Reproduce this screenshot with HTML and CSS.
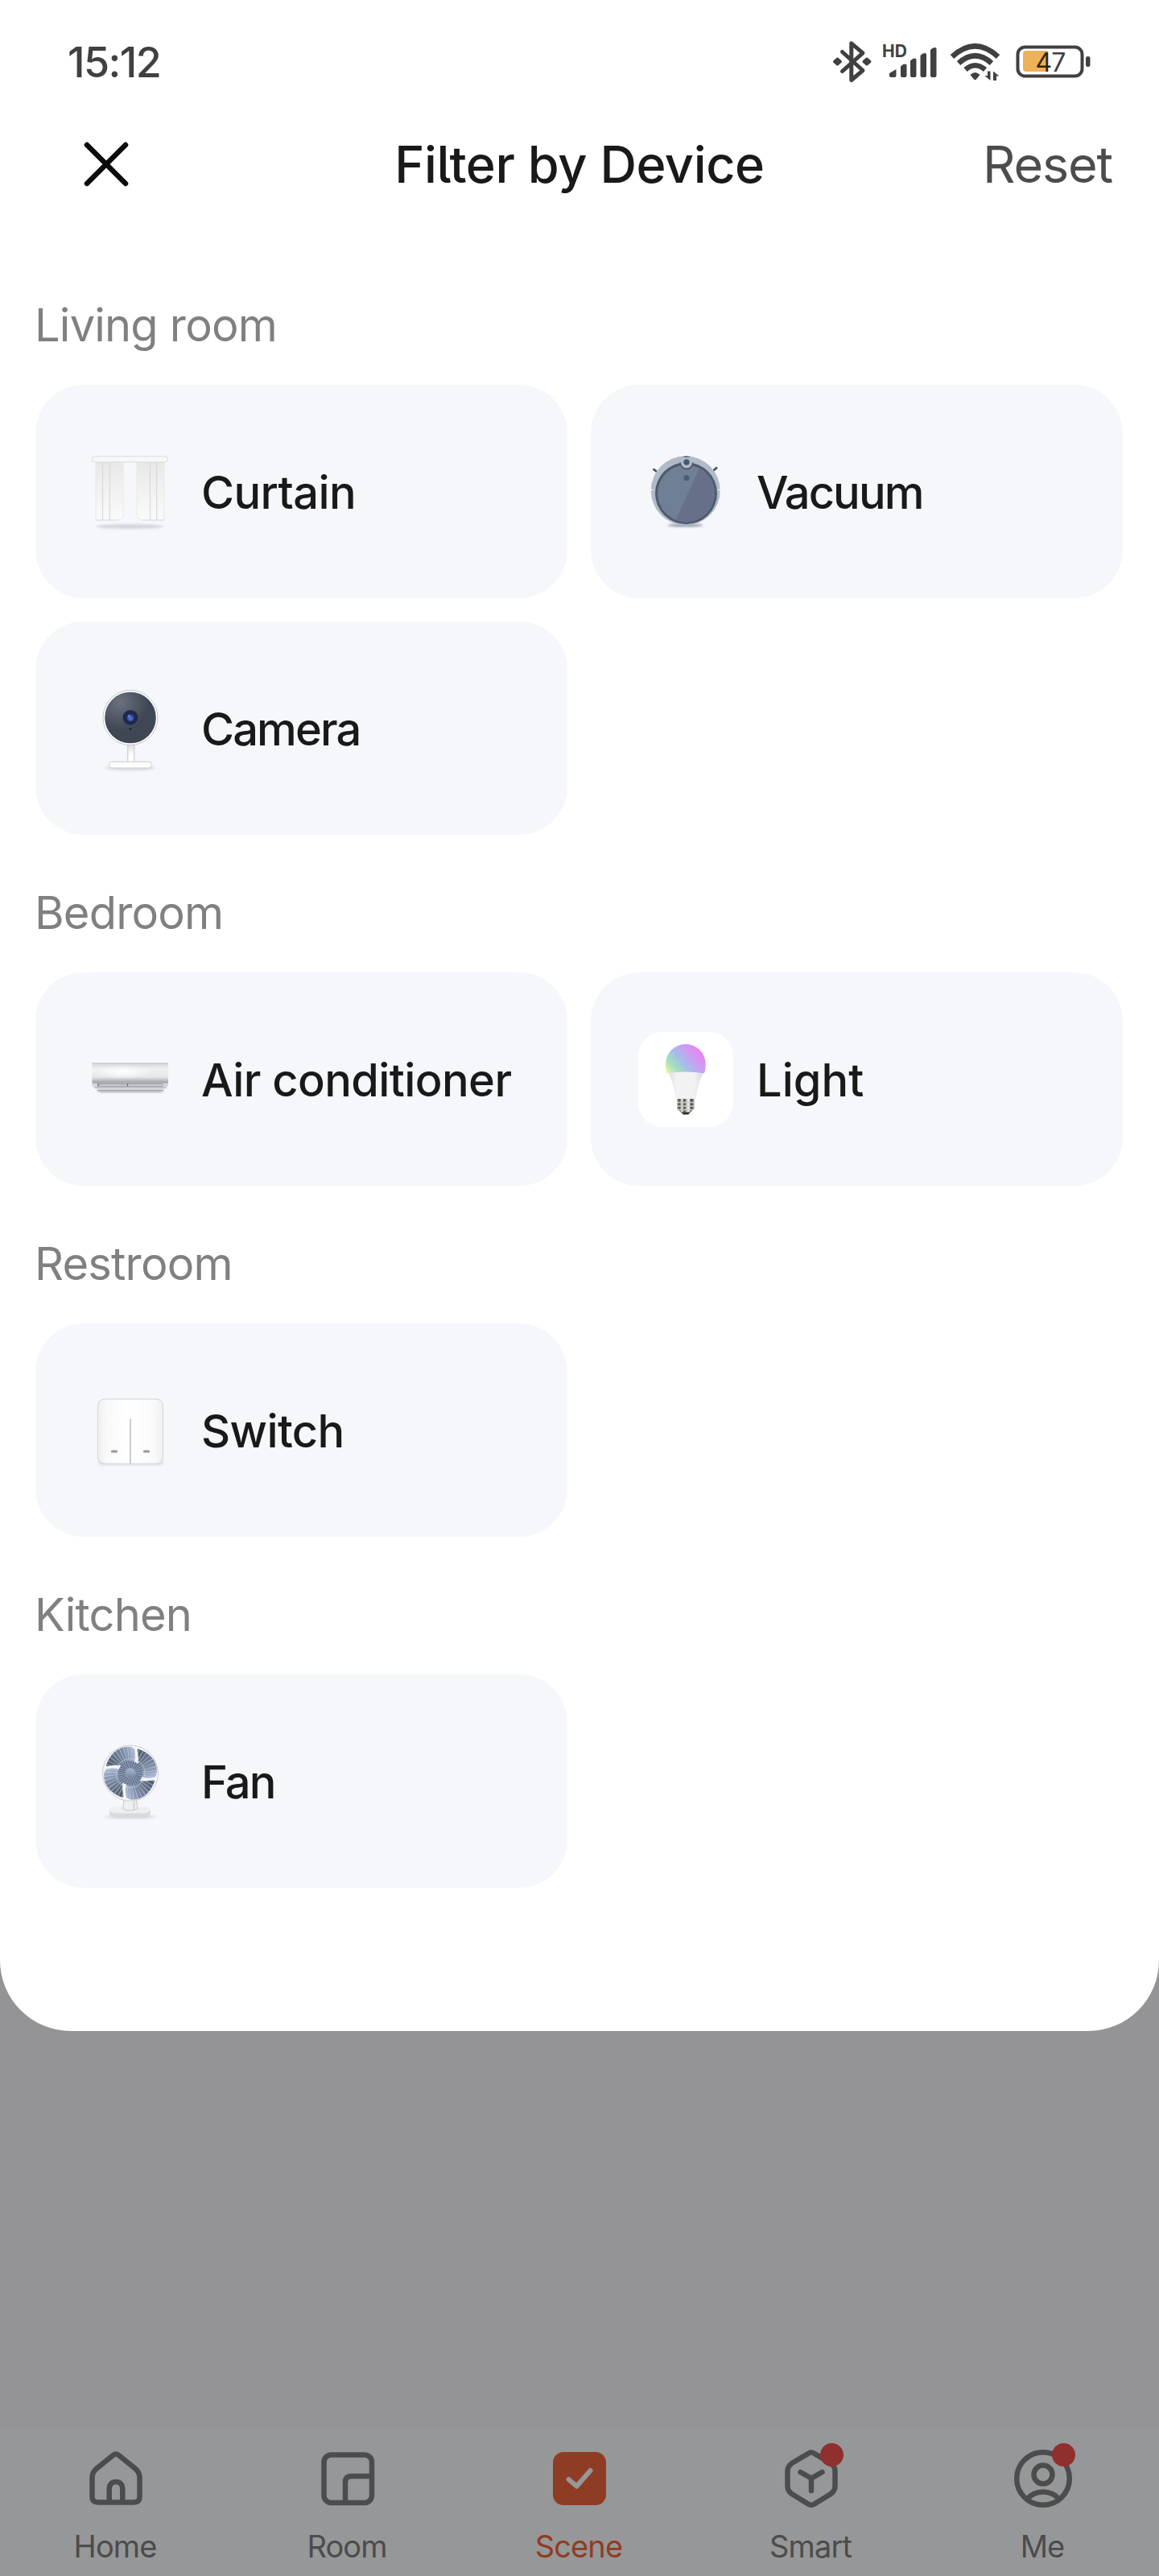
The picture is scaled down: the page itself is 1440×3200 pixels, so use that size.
FILE: index.html
```html
<!DOCTYPE html>
<html lang="en">
<head>
<meta charset="utf-8">
<title>Filter by Device</title>
<link rel="stylesheet" href="styles.css">
</head>
<body>
<div class="screen">
  <section class="sheet">
    <div class="status">
      <span class="status__time">15:12</span>
      <svg class="status__icons" width="330" height="60" viewBox="0 0 330 60">
        <!-- bluetooth -->
        <g transform="translate(-1030 -46)">
          <path d="M1046.5 64.5 L1072 87.5 L1057.8 99.5 V53.8 L1072 65.8 L1046.5 88.5" fill="none" stroke="#404040" stroke-width="5" stroke-linecap="round" stroke-linejoin="round"/>
          <path d="M1036.500 76.500l4-3.500 4 3.500-4 3.500zM1073 76.500l4-3.500 4 3.500-4 3.500z" fill="#404040" stroke="#404040" stroke-width="3" stroke-linejoin="round"/>
          <!-- signal -->
          <text class="status__hd" x="1096" y="71">HD</text>
          <g fill="#404040">
            <path d="M1105 91l8.500-5v8q0 2-2 2h-4.500q-2 0-2-2zM1119 82.500l3-2.500q4.500-1.500 4.500 1v13q0 2-2 2h-3.500q-2 0-2-2zM1131 75.500l3-2.500q4.500-1.500 4.500 1v20q0 2-2 2h-3.500q-2 0-2-2zM1143.500 69l3-2.500q4.500-1.500 4.500 1v26.500q0 2-2 2h-3.500q-2 0-2-2zM1156 62l3-2.500q4.500-1.500 4.500 1v33.500q0 2-2 2h-3.500q-2 0-2-2z"/>
          </g>
          <!-- wifi -->
          <g fill="none" stroke="#404040" stroke-width="6.500">
            <path d="M1183 70.500Q1211.500 44 1240 70.500"/>
            <path d="M1191 78.500Q1211.500 60 1232 78.500"/>
            <path d="M1199.500 86.500Q1211.500 76 1224 86.500"/>
          </g>
          <path d="M1205.500 93q6-6 12 0l-4.500 5.500q-1.500 1.500-3 0z" fill="#404040"/>
          <path d="M1227 88.500h3.500v11.500l-7-6h3.500zM1234 100v-11.500l7.500 6h-3.500v5.500z" fill="#404040"/>
          <!-- battery -->
          <rect x="1264.500" y="58.500" width="80" height="36" rx="9" fill="none" stroke="#404040" stroke-width="4"/>
          <path d="M1275 63h27v26h-27q-4 0-4-4v-18q0-4 4-4z" fill="#ebb257"/>
          <rect x="1349" y="70" width="5.500" height="13" rx="2.500" fill="#404040"/>
          <text class="status__level" x="1286.500" y="89"><tspan class="status__level-on">4</tspan>7</text>
        </g>
      </svg>
    </div>

    <header class="header">
      <svg class="header__close" width="66" height="66" viewBox="0 0 66 66"><path d="M9 9L57 57M57 9L9 57" stroke="#0b0b0b" stroke-width="6.500" stroke-linecap="round"/></svg>
      <h1 class="header__title">Filter by Device</h1>
      <span class="header__reset">Reset</span>
    </header>

    <main class="groups">
      <section class="group">
        <h2 class="group__title">Living room</h2>
        <div class="grid">
          <div class="card">
            <svg class="card__icon" viewBox="0 0 118 118">
              <defs>
                <linearGradient id="cloth" x1="0" y1="0" x2="0" y2="1"><stop offset="0" stop-color="#e8e8e8"/><stop offset="1" stop-color="#fbfbfb"/></linearGradient>
                <filter id="soft" x="-20%" y="-100%" width="140%" height="300%"><feGaussianBlur stdDeviation="1.800"/></filter>
              </defs>
              <ellipse cx="58.500" cy="102" rx="42" ry="2.800" fill="#d3d4d8" filter="url(#soft)"/>
              <path d="M16 21H50V88Q49 94 44 94H16zM67 21H101V94H73Q68 93 67 88z" fill="url(#cloth)" stroke="#e6e6e8" stroke-width=".8"/>
              <path d="M24.500 21V94M33.300 21V94M83.500 21V94M91.700 21V94" stroke="#d9d9da" stroke-width="1.200"/>
              <path d="M16 94H44M73 94H101" stroke="#dcdcde"/>
              <rect x="11.500" y="15" width="94" height="7" rx="3" fill="#f8f8f8" stroke="#dadada"/>
            </svg>
            <span class="card__label">Curtain</span>
          </div>
          <div class="card">
            <svg class="card__icon" viewBox="0 0 118 118">
              <ellipse cx="58.500" cy="100.500" rx="22" ry="1.800" fill="#8b90a0" filter="url(#soft)"/>
              <path d="M18.500 30.500l4.500 3.500M93.500 32.500l4.500-4" stroke="#465060" stroke-width="2.800"/>
              <circle cx="58.700" cy="57.500" r="43" fill="#b1bac8"/>
              <path d="M15 55.500l4.500.8-4.500 1.700zM102.500 55.500l-4.500.8 4.500 1.700z" fill="#f5f7fb"/>
              <circle cx="59.500" cy="60.800" r="38.500" fill="#4f5b6c"/>
              <circle cx="59.500" cy="61" r="35.500" fill="#6f7f96"/>
              <path d="M76.300 29.700A35.500 35.500 0 0 1 46.500 94z" fill="#667088"/>
              <circle cx="60" cy="23" r="8.500" fill="#4f5b6c"/>
              <path d="M53 16h14v6.500a7 7 0 0 1-14 0z" fill="#b1bac8"/>
              <path d="M51 16.500h18v6h-18z" fill="#b1bac8"/>
              <circle cx="60" cy="22.200" r="3.600" fill="#4b5768"/>
              <circle cx="60" cy="41.800" r="3.500" fill="#4f5b6c"/>
            </svg>
            <span class="card__label card__label--tight">Vacuum</span>
          </div>
          <div class="card">
            <svg class="card__icon" viewBox="0 0 118 118">
              <defs>
                <radialGradient id="face" cx=".3" cy=".2" r=".55"><stop offset="0" stop-color="#6c737f"/><stop offset="1" stop-color="#3f4654"/></radialGradient>
                <radialGradient id="iris" cx=".5" cy=".6" r=".6"><stop offset="0" stop-color="#4f80e0"/><stop offset="1" stop-color="#263590"/></radialGradient>
                <linearGradient id="stem" x1="0" y1="0" x2="0" y2="1"><stop offset="0" stop-color="#dfdfdf"/><stop offset=".6" stop-color="#fff"/></linearGradient>
              </defs>
              <ellipse cx="59" cy="108" rx="31" ry="3.500" fill="#dcdde0" filter="url(#soft)"/>
              <rect x="55.800" y="79" width="8" height="22" fill="url(#stem)" stroke="#c6c6c6"/>
              <rect x="32.500" y="100.300" width="53" height="7.700" rx="3.500" fill="#fdfdfd" stroke="#cccccc"/>
              <circle cx="59" cy="45.500" r="34" fill="#fff" stroke="#c4c4c4"/>
              <circle cx="59" cy="45.500" r="31.800" fill="url(#face)"/>
              <circle cx="59" cy="45.200" r="9.300" fill="#20294a"/>
              <circle cx="59" cy="45.500" r="4.600" fill="url(#iris)"/>
              <circle cx="57.300" cy="43.500" r=".9" fill="#a9bdf5"/>
              <circle cx="59" cy="59.500" r="1.500" fill="#20242e"/>
            </svg>
            <span class="card__label card__label--tight">Camera</span>
          </div>
        </div>
      </section>

      <section class="group">
        <h2 class="group__title">Bedroom</h2>
        <div class="grid">
          <div class="card">
            <svg class="card__icon" viewBox="0 0 118 118">
              <defs>
                <linearGradient id="shell" x1="0" y1="0" x2="0" y2="1"><stop offset="0" stop-color="#d6d6da"/><stop offset=".3" stop-color="#f0f0f1"/><stop offset=".7" stop-color="#e6e6e8"/><stop offset="1" stop-color="#9a9c9f"/></linearGradient>
                <radialGradient id="shine" cx=".4" cy=".5" r=".4"><stop offset="0" stop-color="#fff"/><stop offset="1" stop-color="#fff" stop-opacity="0"/></radialGradient>
              </defs>
              <path d="M16 72.500H102L96 74.500H22z" fill="#858990" filter="url(#soft)"/>
              <path d="M11.400 63H106V67L103 70H14.500L11.400 67z" fill="#d3d5d8"/>
              <rect x="11.400" y="38.500" width="94.600" height="25" fill="url(#shell)"/>
              <rect x="11.400" y="38.500" width="94.600" height="22" fill="url(#shine)"/>
              <path d="M11.400 39H106" stroke="#c4c4ca"/>
              <path d="M18 64.700H99M18 67.400H99" stroke="#8e9196" stroke-width="1"/>
              <path d="M19 64V67.500M55.500 64V67.500" stroke="#6a6d72" stroke-width="1.200"/>
              <path d="M98 68.500L101 65M15 69.500H103" stroke="#a8abb0" stroke-width="1"/>
              <path d="M18 72.500H100" stroke="#a4a8ae" stroke-width="1.500"/>
            </svg>
            <span class="card__label">Air conditioner</span>
          </div>
          <div class="card">
            <svg class="card__icon card__icon--tile" viewBox="0 0 118 118">
              <defs>
                <linearGradient id="glow" x1="0" y1=".9" x2="1" y2=".3"><stop offset="0" stop-color="#e4f79c"/><stop offset=".2" stop-color="#a5e0c0"/><stop offset=".45" stop-color="#a6bbe9"/><stop offset=".7" stop-color="#cf9bf5"/><stop offset="1" stop-color="#ee7ef0"/></linearGradient>
                <linearGradient id="neck" x1="0" y1="0" x2="1" y2="0"><stop offset="0" stop-color="#e0e0e2"/><stop offset=".25" stop-color="#f3f2f4"/><stop offset=".75" stop-color="#f1f1f3"/><stop offset="1" stop-color="#dadadd"/></linearGradient>
                <linearGradient id="screw" x1="0" y1="0" x2="1" y2="0"><stop offset="0" stop-color="#88857f"/><stop offset=".15" stop-color="#55524f"/><stop offset=".27" stop-color="#efefef"/><stop offset=".42" stop-color="#4a4744"/><stop offset=".58" stop-color="#d9d6d2"/><stop offset=".7" stop-color="#f2f2f2"/><stop offset=".82" stop-color="#3c3937"/><stop offset="1" stop-color="#a8a5a0"/></linearGradient>
              </defs>
              <path d="M48.500 82.500H69.500V95L65 99.500H52.500L48.500 95z" fill="url(#screw)"/>
              <path d="M48 87.500H70M48 92H70M48 96.500H69" stroke="#d0cdc9" stroke-width="1.300"/>
              <path d="M53 99.500H65L62 102.500H56z" fill="#2f2d2c"/>
              <path d="M37 50Q58.500 47 81 50Q75 62 72.500 77L71.500 83H47L45.500 76Q43 62 37 50z" fill="url(#neck)"/>
              <path d="M35.500 51.200Q33.800 45 33.800 40A25 25 0 0 1 83.800 40Q83.800 46 82 51.200Q58.500 48 35.500 51.200z" fill="url(#glow)"/>
            </svg>
            <span class="card__label card__label--light">Light</span>
          </div>
        </div>
      </section>

      <section class="group">
        <h2 class="group__title">Restroom</h2>
        <div class="grid">
          <div class="card">
            <svg class="card__icon" viewBox="0 0 118 118">
              <defs><linearGradient id="plate" x1="0" y1="0" x2="1" y2="0"><stop offset="0" stop-color="#efefef"/><stop offset=".15" stop-color="#fafafa"/><stop offset=".5" stop-color="#fff"/><stop offset=".85" stop-color="#fafafa"/><stop offset="1" stop-color="#f0f0f0"/></linearGradient></defs>
              <rect x="19" y="96" width="81" height="6" rx="3" fill="#dfe0e4" filter="url(#soft)"/>
              <rect x="18.500" y="20" width="81" height="80.300" rx="8.500" fill="url(#plate)" stroke="#d3d4d6"/>
              <path d="M59 44.500V100" stroke="#c6c7ca" stroke-width="1.800"/>
              <rect x="35" y="83.400" width="8" height="3" rx="1" fill="#98999e"/>
              <rect x="75" y="83.400" width="8" height="3" rx="1" fill="#98999e"/>
            </svg>
            <span class="card__label">Switch</span>
          </div>
        </div>
      </section>

      <section class="group">
        <h2 class="group__title">Kitchen</h2>
        <div class="grid">
          <div class="card">
            <svg class="card__icon" viewBox="0 0 118 118">
              <defs>
                <linearGradient id="blade" x1="0" y1=".6" x2="1" y2=".3"><stop offset="0" stop-color="#4f5c70"/><stop offset=".55" stop-color="#77869f"/><stop offset="1" stop-color="#abb9da"/></linearGradient>
                <linearGradient id="hub" x1="0" y1="0" x2="0" y2="1"><stop offset="0" stop-color="#a9b8d6"/><stop offset="1" stop-color="#74839b"/></linearGradient>
                <path id="wing" d="M-30 -10.500Q-22 -32 -3 -33Q6 -33 6 -26Q6.500 -18 4 -13L-9 -9Q-16 -11 -29 -8.500Q-30.500 -9 -30 -10.500z" fill="url(#blade)"/>
              </defs>
              <ellipse cx="59" cy="103" rx="32" ry="2.600" fill="#dcdde0" filter="url(#soft)"/>
              <path d="M33 94Q33 91 39 91H78Q83.700 91 83.700 95V100Q83 104.500 73 104.500H44Q33 104.500 33 99z" fill="#d9dadd"/>
              <path d="M33 94Q33 90.500 42 90.500H75Q83.700 90.500 83.700 94.500Q82 98.500 74 98.500H43Q34 98.500 33 94z" fill="#eeeff1"/>
              <path d="M51 82H66.500L67.800 93Q59 97.500 49.700 93z" fill="#f0f0f2" stroke="#b9bbc0" stroke-width=".8"/>
              <path d="M63.500 84V94" stroke="#d3d4d8" stroke-width="2"/>
              <g transform="translate(59 48.700)">
                <circle r="34.500" fill="#fafbfd" stroke="#c8cbd1" stroke-width="1"/>
                <use href="#wing"/>
                <use href="#wing" transform="rotate(90)"/>
                <use href="#wing" transform="rotate(180)"/>
                <use href="#wing" transform="rotate(270)"/>
                <circle r="24.500" fill="none" stroke="#d6dae2" stroke-width="19" stroke-dasharray=".700 3.149" opacity=".7"/>
                <circle r="18" fill="none" stroke="#d6dae2" stroke-width=".6"/>
                <circle r="15" fill="#5f6e87"/>
                <circle r="10.500" fill="none" stroke="#a3b0c8" stroke-width="9" stroke-dasharray=".800 1.399"/>
                <circle r="6.500" fill="url(#hub)" stroke="#8997b0" stroke-width=".8"/>
              </g>
            </svg>
            <span class="card__label card__label--tight">Fan</span>
          </div>
        </div>
      </section>
    </main>
  </section>

  <nav class="tabs">
    <div class="tab">
      <svg class="tab__icon" viewBox="0 0 84 84" fill="none" stroke="#4c4c4c" stroke-width="6.500"><path d="M38.500 13Q42 10 45.500 13L66 29.500Q71.500 34.500 71.500 40V64.500Q71.500 71.500 64.500 71.500H19.500Q12.500 71.500 12.500 64.500V40Q12.500 34.500 18 29.500z"/><path d="M33.700 71V54Q34.500 46 42 46Q49.500 46 50.300 54V71"/></svg>
      <span class="tab__label">Home</span>
    </div>
    <div class="tab">
      <svg class="tab__icon" viewBox="0 0 84 84" fill="none" stroke="#4c4c4c" stroke-width="6.500"><rect x="12.500" y="12.500" width="59.500" height="59.500" rx="9"/><path d="M39 71V46.500Q39 39 46.500 39H71"/></svg>
      <span class="tab__label">Room</span>
    </div>
    <div class="tab tab--active">
      <svg class="tab__icon" viewBox="0 0 84 84"><rect x="9" y="9" width="66" height="66" rx="13" fill="#8f3c24"/><path d="M28.500 43L38.500 51.500L55.500 32" fill="none" stroke="#969798" stroke-width="6" stroke-linecap="round" stroke-linejoin="round"/></svg>
      <span class="tab__label">Scene</span>
    </div>
    <div class="tab">
      <svg class="tab__icon" viewBox="0 0 84 84" fill="none" stroke="#4c4c4c" stroke-width="6.500"><path d="M38 11Q42 8 46 11L65.500 22.500Q71.500 26.500 71.500 32.500V51.500Q71.500 57.500 65.500 61.500L46 73.500Q42 76 38 73.500L18.500 61.500Q12.500 57.500 12.500 51.500V32.500Q12.500 26.500 18.500 22.500z"/><path d="M28.500 34L42 41.500L55.500 34M42 41.500V57" stroke-linecap="round"/><circle cx="67.500" cy="12.500" r="14.500" fill="#8f302e" stroke="none"/></svg>
      <span class="tab__label">Smart</span>
    </div>
    <div class="tab">
      <svg class="tab__icon" viewBox="0 0 84 84" fill="none" stroke="#4c4c4c" stroke-width="6.500"><circle cx="42" cy="42" r="32.800"/><circle cx="42" cy="37" r="11.500"/><path d="M22 67.500Q30 58.500 42 58.500T62 67.500"/><circle cx="67.500" cy="12.500" r="14.500" fill="#8f302e" stroke="none"/></svg>
      <span class="tab__label">Me</span>
    </div>
  </nav>
</div>
</body>
</html>
```
FILE: styles.css
```css
* {
  box-sizing: border-box;
}

body {
  margin: 0;
  font-family: Inter, "Noto Sans", sans-serif;
  font-feature-settings: "cv05";
}

.screen {
  display: flex;
  flex-direction: column;
  justify-content: space-between;
  height: 3200px;
  background: #949496;
}

.sheet {
  height: 2523px;
  background: #fff;
  border-radius: 0 0 88px 88px;
}

/* Status bar */
.status {
  display: flex;
  align-items: center;
  justify-content: space-between;
  height: 156px;
  padding: 0 80px 4px 84px;
}

.status__time {
  padding-top: 3px;
  color: #404040;
  font-size: 52px;
  font-weight: 500;
  letter-spacing: -1.6px;
}

.status__icons {
  display: block;
}

.status__hd {
  fill: #404040;
  font-size: 21px;
  font-weight: 700;
}

.status__level {
  fill: #404040;
  font-size: 32px;
  font-weight: 400;
  letter-spacing: -1px;
}

.status__level-on {
  fill: #33270f;
}

/* Sheet header */
.header {
  display: grid;
  grid-template-columns: 1fr auto 1fr;
  align-items: center;
  height: 96px;
  padding: 0 58px 0 99px;
}

.header__close {
  display: block;
}

.header__title {
  margin: 0 41px 0 0;
  color: #191919;
  font-size: 63px;
  font-weight: 500;
  line-height: 96px;
  letter-spacing: -0.4px;
}

.header__reset {
  justify-self: end;
  color: #4c4c4c;
  font-size: 63px;
  line-height: 96px;
  letter-spacing: -1.2px;
}

/* Device groups */
.groups {
  padding: 91px 44px 0;
}

.group__title {
  margin: 0 0 0 -1px;
  height: 135px;
  color: #808080;
  font-size: 56px;
  font-weight: 400;
  line-height: 123px;
  letter-spacing: -0.8px;
}

.group + .group .group__title {
  height: 171px;
  padding-top: 36px;
}

.grid {
  display: grid;
  grid-template-columns: 661px 661px;
  gap: 29px;
}

.card {
  display: flex;
  align-items: center;
  gap: 29px;
  height: 265px;
  padding-left: 59px;
  border-radius: 60px;
  background: #f5f7fb;
}

.card__icon {
  display: block;
  width: 118px;
  height: 118px;
}

.card__icon--tile {
  border-radius: 30px;
  background: #fff;
}

.card__label {
  padding-top: 2px;
  color: #191919;
  font-size: 56px;
  font-weight: 500;
  letter-spacing: -0.6px;
}

.card__label--tight {
  letter-spacing: -1.9px;
}

.card__label--light {
  letter-spacing: 0;
}

/* Bottom tabs */
.tabs {
  display: grid;
  grid-template-columns: repeat(5, 1fr);
  height: 184px;
  background: #969798;
}

.tab {
  display: flex;
  flex-direction: column;
  align-items: center;
  gap: 20px;
  padding-top: 21px;
  color: #4c4c4c;
}

.tab--active {
  color: #8f3c24;
}

.tab__icon {
  display: block;
  width: 84px;
  height: 84px;
  overflow: visible;
}

.tab__label {
  margin-left: -2px;
  font-size: 38px;
  line-height: 45px;
  letter-spacing: -0.9px;
}
```
